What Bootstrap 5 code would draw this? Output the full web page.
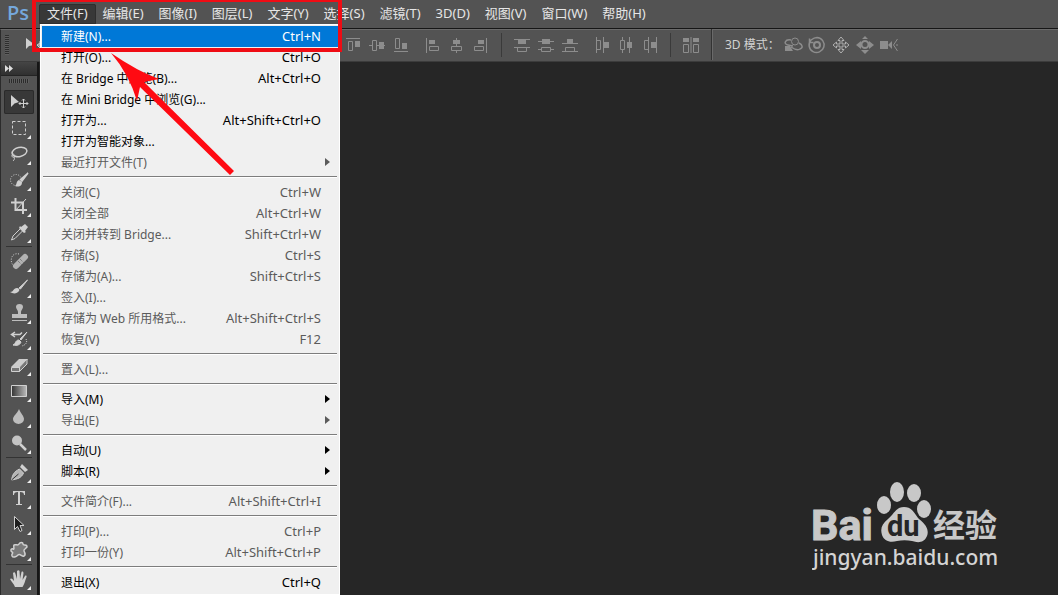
<!DOCTYPE html>
<html lang="zh-CN">
<head>
<meta charset="utf-8">
<meta name="viewport" content="width=device-width, initial-scale=1">
<title>Photoshop</title>
<link rel="stylesheet" href="https://cdn.jsdelivr.net/npm/bootstrap@5.3.0/dist/css/bootstrap.min.css">
<style>
body{background:#262626;color:#e6e6e6;font-family:"Noto Sans","Noto Sans CJK SC",sans-serif;font-size:12px;line-height:20px}
button{background:none;border:0;padding:0;color:inherit;font:inherit}
svg{display:block}
.menu-bar{background:#535353;height:29px;padding-top:4px;border-bottom:1px solid #161616;font-size:13px}
.brand{width:39px;padding-left:7px;color:#75a8dc;font:600 20px/18px "Open Sans",sans-serif}
.menu-btn{height:20px;padding:0 7px 2px;line-height:18px}
.menu-btn + .menu-btn{margin-left:1px}
.menu-btn.show{padding:0 8px 2px;background:#383838;border-radius:2px 2px 0 0;outline:1px solid #2e2e2e;outline-offset:-1px}
.file-menu{left:1px;top:100%;width:300px;padding:1px;border:1px solid #fff;border-radius:0;background:#f0f0f0;margin:0;font-size:12px}
.file-menu .dropdown-item{height:21px;padding:0 17px 0 19px;line-height:21px;color:#000;position:relative}
.file-menu .dropdown-item.off{color:#5b5b5b}
.file-menu .dropdown-item.active{background:#0078d7;color:#fff}
.keys{font-size:13px}
.file-menu .dropdown-divider{margin:3px 1px 4px;border-top:1px solid #7d7d7d;border-bottom:1px solid #fff;opacity:1}
.more::after{content:"";position:absolute;right:8px;top:6px;border:4px solid transparent;border-left:5px solid currentColor;border-right:0}
.option-bar{background:#535353;height:33px;padding-bottom:2px;border-top:1px solid #6a6a6a;border-bottom:1px solid #3c3c3c;border-left:1px solid #2b2b2b}
.grip{width:4px;height:20px;margin-left:4px;background:repeating-linear-gradient(#2e2e2e 0 1px,#5e5e5e 1px 2px)}
.preset{width:332px;padding-left:9px}
.mode-label{width:60px;color:#d2d2d2}
.split{width:1px;height:24px;background:#3a3a3a}
.split-tall{width:2px;height:31px;background:#333;border-right:1px solid #6a6a6a}
.opt{width:24px;height:24px;flex:none;fill:none;stroke:#8d8d8d;color:#8d8d8d}
.opt-set + .opt-set{margin-left:8px}
.tool-bar{width:39px;background:#535353;border-left:1px solid #2b2b2b;border-right:2px solid #161616}
.tool-head{height:14px;background:linear-gradient(#454545,#303030);border-bottom:1px solid #232323;padding:3px 0 0 4px}
.tool-grip{width:20px;height:4px;margin:3px 0 6px 8px;background:repeating-linear-gradient(90deg,#2b2b2b 0 1px,#5e5e5e 1px 2px)}
.tool{width:30px;height:24px;margin:1px 0 1px 3px;position:relative;border-radius:2px;fill:none;stroke:#d0d0d0;color:#d0d0d0}
.tool svg{margin:0 auto}
.tool.on{background:#383838;box-shadow:inset 0 0 0 1px #2a2a2a}
.tool.sub::after{content:"";position:absolute;right:3px;bottom:1px;border-left:4px solid transparent;border-bottom:4px solid #eee}
.tool-line{height:1px;margin:1px 5px;background:#333}
.callout{left:32px;top:-2px;width:310px;height:54px;border:4px solid #ef0c14;z-index:1100;pointer-events:none}
.pointer{left:105px;top:48px;z-index:1101;pointer-events:none}
.watermark{right:46px;bottom:20px}
.wm-cn{font-family:"Noto Sans CJK SC",sans-serif}
</style>
</head>
<body class="d-flex flex-column vh-100 overflow-hidden position-relative">
<header class="menu-bar d-flex align-items-start flex-shrink-0">
  <span class="brand">Ps</span>
  <div class="dropdown">
    <button class="menu-btn show d-block" type="button" aria-expanded="true">文件(F)</button>
    <ul class="dropdown-menu show file-menu">
      <li><button class="dropdown-item active d-flex align-items-baseline justify-content-between">新建(N)...<span class="keys">Ctrl+N</span></button></li>
      <li><button class="dropdown-item d-flex align-items-baseline justify-content-between">打开(O)...<span class="keys">Ctrl+O</span></button></li>
      <li><button class="dropdown-item d-flex align-items-baseline justify-content-between">在 Bridge 中浏览(B)...<span class="keys">Alt+Ctrl+O</span></button></li>
      <li><button class="dropdown-item">在 Mini Bridge 中浏览(G)...</button></li>
      <li><button class="dropdown-item d-flex align-items-baseline justify-content-between">打开为...<span class="keys">Alt+Shift+Ctrl+O</span></button></li>
      <li><button class="dropdown-item">打开为智能对象...</button></li>
      <li><button class="dropdown-item off more">最近打开文件(T)</button></li>
      <li><hr class="dropdown-divider"></li>
      <li><button class="dropdown-item off d-flex align-items-baseline justify-content-between">关闭(C)<span class="keys">Ctrl+W</span></button></li>
      <li><button class="dropdown-item off d-flex align-items-baseline justify-content-between">关闭全部<span class="keys">Alt+Ctrl+W</span></button></li>
      <li><button class="dropdown-item off d-flex align-items-baseline justify-content-between">关闭并转到 Bridge...<span class="keys">Shift+Ctrl+W</span></button></li>
      <li><button class="dropdown-item off d-flex align-items-baseline justify-content-between">存储(S)<span class="keys">Ctrl+S</span></button></li>
      <li><button class="dropdown-item off d-flex align-items-baseline justify-content-between">存储为(A)...<span class="keys">Shift+Ctrl+S</span></button></li>
      <li><button class="dropdown-item off">签入(I)...</button></li>
      <li><button class="dropdown-item off d-flex align-items-baseline justify-content-between">存储为 Web 所用格式...<span class="keys">Alt+Shift+Ctrl+S</span></button></li>
      <li><button class="dropdown-item off d-flex align-items-baseline justify-content-between">恢复(V)<span class="keys">F12</span></button></li>
      <li><hr class="dropdown-divider"></li>
      <li><button class="dropdown-item off">置入(L)...</button></li>
      <li><hr class="dropdown-divider"></li>
      <li><button class="dropdown-item more">导入(M)</button></li>
      <li><button class="dropdown-item off more">导出(E)</button></li>
      <li><hr class="dropdown-divider"></li>
      <li><button class="dropdown-item more">自动(U)</button></li>
      <li><button class="dropdown-item more">脚本(R)</button></li>
      <li><hr class="dropdown-divider"></li>
      <li><button class="dropdown-item off d-flex align-items-baseline justify-content-between">文件简介(F)...<span class="keys">Alt+Shift+Ctrl+I</span></button></li>
      <li><hr class="dropdown-divider"></li>
      <li><button class="dropdown-item off d-flex align-items-baseline justify-content-between">打印(P)...<span class="keys">Ctrl+P</span></button></li>
      <li><button class="dropdown-item off d-flex align-items-baseline justify-content-between">打印一份(Y)<span class="keys">Alt+Shift+Ctrl+P</span></button></li>
      <li><hr class="dropdown-divider"></li>
      <li><button class="dropdown-item d-flex align-items-baseline justify-content-between">退出(X)<span class="keys">Ctrl+Q</span></button></li>
    </ul>
  </div>
  <button class="menu-btn">编辑(E)</button>
  <button class="menu-btn">图像(I)</button>
  <button class="menu-btn">图层(L)</button>
  <button class="menu-btn">文字(Y)</button>
  <button class="menu-btn">选择(S)</button>
  <button class="menu-btn">滤镜(T)</button>
  <button class="menu-btn">3D(D)</button>
  <button class="menu-btn">视图(V)</button>
  <button class="menu-btn">窗口(W)</button>
  <button class="menu-btn">帮助(H)</button>
</header>

<div class="option-bar d-flex align-items-center flex-shrink-0">
  <span class="grip"></span>
  <span class="preset"><svg width="26" height="20" viewBox="0 0 26 20"><path d="M8 3v11l3-3 6-1z" fill="#d0d0d0"/><path d="M22 6v9M20 10h6M22 8l-3 2 3 3" stroke="#d0d0d0" fill="none"/></svg></span>
  <div class="d-flex opt-set">
    <button class="opt" aria-label="顶对齐"><svg width="24" height="24"><path d="M5 5.500h14M7.500 8.500h4v9h-4z"/><path d="M14 8h5v6h-5z" fill="currentColor" stroke="none"/></svg></button>
    <button class="opt" aria-label="垂直居中对齐"><svg width="24" height="24"><path d="M4 12.500h3M12 12.500h8M7.500 7.500h4v10h-4z"/><path d="M14 9h5v7h-5z" fill="currentColor" stroke="none"/></svg></button>
    <button class="opt" aria-label="底对齐"><svg width="24" height="24"><path d="M5 18.500h14M6.500 5.500h4v10h-4z"/><path d="M13 10h5v6h-5z" fill="currentColor" stroke="none"/></svg></button>
  </div>
  <div class="d-flex opt-set">
    <button class="opt" aria-label="左对齐"><svg width="24" height="24"><path d="M5.500 5v15M8.500 13.500h9v4h-9z"/><path d="M8 7h6v4H8z" fill="currentColor" stroke="none"/></svg></button>
    <button class="opt" aria-label="水平居中对齐"><svg width="24" height="24"><path d="M11.500 5v9M11.500 18v2M6.500 13.500h10v4h-10z"/><path d="M8 7h7v4H8z" fill="currentColor" stroke="none"/></svg></button>
    <button class="opt" aria-label="右对齐"><svg width="24" height="24"><path d="M17.500 5v15M5.500 13.500h9v4h-9z"/><path d="M9 7h6v4H9z" fill="currentColor" stroke="none"/></svg></button>
  </div>
  <span class="split mx-2"></span>
  <div class="d-flex opt-set">
    <button class="opt" aria-label="按顶分布"><svg width="24" height="24"><path d="M4 6.500h16M4 14.500h16M7.500 14.500h9v4h-9z"/><path d="M8 7h8v4H8z" fill="currentColor" stroke="none"/></svg></button>
    <button class="opt" aria-label="垂直居中分布"><svg width="24" height="24"><path d="M4 8.500h16M4 16.500h3M16 16.500h4M7.500 14.500h9v4h-9z"/><path d="M8 6h8v5H8z" fill="currentColor" stroke="none"/></svg></button>
    <button class="opt" aria-label="按底分布"><svg width="24" height="24"><path d="M4 10.500h16M4 18.500h16M7.500 14.500h9v4h-9z"/><path d="M9 6h6v4H9z" fill="currentColor" stroke="none"/></svg></button>
  </div>
  <div class="d-flex opt-set">
    <button class="opt" aria-label="按左分布"><svg width="24" height="24"><path d="M6.500 4v16M13.500 4v16M6.500 7.500h4v9h-4z"/><path d="M14 9h5v6h-5z" fill="currentColor" stroke="none"/></svg></button>
    <button class="opt" aria-label="水平居中分布"><svg width="24" height="24"><path d="M8.500 4v3M8.500 17v3M15.500 4v16M6.500 7.500h4v9h-4z"/><path d="M13 9h5v6h-5z" fill="currentColor" stroke="none"/></svg></button>
    <button class="opt" aria-label="按右分布"><svg width="24" height="24"><path d="M10.500 4v16M18.500 4v16M6.500 7.500h4v9h-4z"/><path d="M13 9h5v6h-5z" fill="currentColor" stroke="none"/></svg></button>
  </div>
  <span class="split mx-2"></span>
  <button class="opt" aria-label="自动对齐图层"><svg width="24" height="24"><path d="M12 4v16M4.500 11.500h5v8h-5zM14.500 11.500h5v8h-5z"/><path d="M4 5h6v4H4zM14 5h6v4h-6z" fill="currentColor" stroke="none"/></svg></button>
  <span class="split-tall ms-2"></span>
  <span class="mode-label ms-2 ps-1 text-nowrap">3D 模式：</span>
  <button class="opt" aria-label="旋转 3D 对象"><svg width="24" height="24"><circle cx="14" cy="8.500" r="3.500"/><path d="M10 7c-6-1-8 4-3 5l5 1M18 10c4 2 4 5 1 6-3 2-6 0-9-2" stroke-width="1.500"/><path d="M4 13v5h8l-3-5z" fill="currentColor" stroke="none"/></svg></button>
  <button class="opt" aria-label="滚动 3D 对象"><svg width="24" height="24"><circle cx="12" cy="12" r="3" stroke-width="2"/><path d="M6 7a7.500 7.500 0 1 0 6-2.500c-2 0-4 1-6 2.500M4.500 5.500v4h4" stroke-width="1.500"/></svg></button>
  <button class="opt" aria-label="拖动 3D 对象"><svg width="24" height="24"><path d="M12 4l3 3.500h-2V11h3.500V9l3.500 3-3.500 3v-2H13v3.500h2L12 20l-3-3.500h2V13H7.500v2L4 12l3.500-3v2H11V7.500H9z" stroke="#b0b0b0"/></svg></button>
  <button class="opt" aria-label="滑动 3D 对象"><svg width="24" height="24"><circle cx="12" cy="11.500" r="3.500" stroke-width="2"/><path d="M12 3l3 3H9zM12 21l4-4H8zM3 12l5-4v8zM21 12l-5-4v8z" fill="currentColor" stroke="none"/></svg></button>
  <button class="opt" aria-label="缩放 3D 对象"><svg width="24" height="24"><path d="M3 8h8v8H3zM11 12l4-4v8z" fill="currentColor" stroke="none"/><path d="M20.500 6l-4 6 4 6M19 12h2"/></svg></button>
</div>

<div class="d-flex flex-grow-1 overflow-hidden position-relative">
  <nav class="tool-bar d-flex flex-column flex-shrink-0" aria-label="工具">
    <div class="tool-head"><svg width="10" height="8"><path d="M0 0l4 3.500L0 7zM4 0l4 3.500L4 7z" fill="#ddd"/></svg></div>
    <div class="tool-grip"></div>
    <button class="tool on d-block" aria-label="移动"><svg width="24" height="24"><path d="M4 5v12l3.500-3.500L12 12z" fill="currentColor" stroke="none"/><path d="M16.500 9v9M12 13.500h9M15 10.500l1.500-1.500 1.500 1.500M15 16.500l1.500 1.500 1.500-1.500M13.500 12L12 13.500l1.500 1.500M19.500 12l1.500 1.500-1.500 1.500"/></svg></button>
    <button class="tool sub d-block" aria-label="矩形选框"><svg width="24" height="24"><path d="M5.500 5.500h13v13h-13z" stroke-dasharray="3 2"/></svg></button>
    <button class="tool sub d-block" aria-label="套索"><svg width="24" height="24"><ellipse cx="12.500" cy="10" rx="7.500" ry="4.500" transform="rotate(-12 12.500 10)" stroke-width="1.500"/><path d="M6 12c-2 1-1 4 1 3s0-3-1-3M7 15c1 2 0 3-1 4"/></svg></button>
    <button class="tool sub d-block" aria-label="快速选择"><svg width="24" height="24"><circle cx="9" cy="12" r="5.500" stroke-dasharray="1 1.500"/><path d="M21 5l-6 8-1.500-1.500z" fill="currentColor" stroke-width="1.500"/><path d="M12 12l3 2c0 5-4 5-7 4 2-1 1-5 4-6z" fill="currentColor" stroke="none"/></svg></button>
    <button class="tool sub d-block" aria-label="裁剪"><svg width="24" height="24"><path d="M8.500 4v12H20M4 8.500h12V20" stroke-width="2"/><path d="M8 17L19 5"/></svg></button>
    <button class="tool sub d-block" aria-label="吸管"><svg width="24" height="24"><path d="M14 7l4-3 3 3-3 4 1 1-2 1-5-5 1-2z" fill="currentColor" stroke="none"/><path d="M13 9l-7 7-1.500 4L8 18.500 15.500 11"/></svg></button>
    <div class="tool-line"></div>
    <button class="tool sub d-block" aria-label="污点修复画笔"><svg width="24" height="24"><path d="M12 5c-8-2-10 8-5 12" stroke-dasharray="1 1.500"/><path d="M9 17l9-9" stroke-width="6" stroke-linecap="round" stroke="#b2b2b2"/><path d="M11 12l4 4M13 10l4 4" stroke="#666" stroke-dasharray="1 1"/></svg></button>
    <button class="tool sub d-block" aria-label="画笔"><svg width="24" height="24"><path d="M20.500 5l-7 9-1.500-1z" fill="currentColor"/><path d="M10 13c2 0 3 2 2 3-2 3-6 3-9 1 4 0 3-4 7-4z" fill="currentColor" stroke="none"/></svg></button>
    <button class="tool sub d-block" aria-label="仿制图章"><svg width="24" height="24"><path d="M11 11c0-2-2-3-2-5a3.500 3 0 0 1 7 0c0 2-2 3-2 5v2h6v4H5v-4h6zM5 19h15v1H5z" fill="#bdbdbd" stroke="none"/></svg></button>
    <button class="tool sub d-block" aria-label="历史记录画笔"><svg width="24" height="24"><path d="M20 5l-6 8-1-1zM12 13l2 2c-1 3-4 4-8 3 3-1 2-5 6-5z" fill="currentColor"/><path d="M5 7.500h8l2-2M8 5L4.500 7.500 8 10" stroke-width="1.500"/><path d="M19 12c2 4-1 6-4 7" stroke-dasharray="1 1"/></svg></button>
    <button class="tool sub d-block" aria-label="橡皮擦"><svg width="24" height="24"><path d="M4 14l8-8h9l-8 8z" fill="#ccc" stroke="none"/><path d="M4.500 14.500h8v4h-8zM12.500 18.500L20 11V6l-7.500 8z" fill="#777"/></svg></button>
    <button class="tool sub d-block" aria-label="渐变"><svg width="24" height="24"><defs><linearGradient id="fade"><stop stop-color="#333"/><stop offset="1" stop-color="#bbb"/></linearGradient></defs><path d="M4.500 6.500h15v11h-15z" fill="url(#fade)"/></svg></button>
    <button class="tool sub d-block" aria-label="模糊"><svg width="24" height="24"><path d="M12 4c2 5 5 7 5 10a5.500 5 0 0 1-11 0c0-3 4-5 6-10z" fill="#bdbdbd" stroke="none"/></svg></button>
    <button class="tool sub d-block" aria-label="减淡"><svg width="24" height="24"><circle cx="10" cy="9.500" r="5" fill="#c4c4c4" stroke="none"/><path d="M13 13l6 6" stroke-width="2.500"/></svg></button>
    <div class="tool-line"></div>
    <button class="tool sub d-block" aria-label="钢笔"><svg width="24" height="24"><path d="M4.500 20c1-5 2-8 8-11l4 4c-2 5-6 6-12 7z" fill="#b5b5b5"/><path d="M4.500 20l7-6" stroke="#333"/><path d="M13 7l2-3 6 6-3 2z" fill="currentColor" stroke="none"/></svg></button>
    <button class="tool sub d-block" aria-label="横排文字"><svg width="24" height="24"><path d="M6 5h12v4h-1c0-2-1-3-4-3v12h2v1H9v-1h2V6C8 6 7 7 7 9H6z" fill="currentColor" stroke="none"/></svg></button>
    <button class="tool sub d-block" aria-label="路径选择"><svg width="24" height="24"><path d="M7.500 4.500v13l3-3 2.500 5 2-1-2-5h4z" fill="#1d1d1d"/></svg></button>
    <button class="tool sub d-block" aria-label="自定形状"><svg width="24" height="24"><path d="M7 7c2-1 4 1 5-1s4-2 4 0 3 0 4 2-4 3-3 5 2 4 0 5-4-3-6-1-5 3-6 1 2-3 0-4-1-4 1-3 0-3 1-4z" fill="#7a7a7a" stroke-width="1.500"/></svg></button>
    <div class="tool-line"></div>
    <button class="tool sub d-block" aria-label="抓手"><svg width="24" height="24"><path d="M8 20c-1-3-4-6-5-8 1-1 2-1 4 2L6 6c1-1 2-1 2.500 1l1.500 5V4c1-1 2-1 2.500 0l.5 8 1.500-7c1-1 2 0 2 1L15.500 13 18 9c1-1 2 0 1.500 1-1.500 4-2 7-4 10z" fill="currentColor" stroke="none"/></svg></button>
  </nav>
  <main class="flex-grow-1"></main>
  <svg class="watermark position-absolute" width="200" height="96" viewBox="0 0 200 96" fill="#c8c8c8" role="img" aria-label="百度经验">
    <text x="-1" y="61" font-family="Roboto, sans-serif" font-weight="700" font-size="43" stroke="#c8c8c8">Bai</text>
    <ellipse cx="72" cy="26" rx="7" ry="9"/><ellipse cx="85" cy="13" rx="7" ry="10"/><ellipse cx="102" cy="14" rx="7" ry="9"/><ellipse cx="112" cy="30" rx="7" ry="9"/>
    <path d="M92 28c9 0 11 8 15 12 8 6 10 12 8 17-3 7-9 7-15 5-5-1-10-1-15 0-7 2-13 0-15-6-2-7 0-11 6-16s8-12 16-12z"/>
    <text x="75" y="57" font-family="Roboto, sans-serif" font-weight="700" font-size="29" fill="#262626">du</text>
    <text class="wm-cn" x="121" y="58" font-weight="700" font-size="32">经验</text>
    <text x="1" y="86" font-family="Noto Sans, sans-serif" font-size="21" font-weight="500" fill="#d4d4d4">jingyan.baidu.com</text>
  </svg>
</div>
<div class="callout position-absolute"></div>
<svg class="pointer position-absolute" width="134" height="130" fill="#ff0a12"><path d="M6 5Q32 23 54 31L39 34l90 89-4 4-90-88-3 14Q24 26 6 5z"/></svg>
<script src="https://cdn.jsdelivr.net/npm/bootstrap@5.3.0/dist/js/bootstrap.bundle.min.js"></script>
</body>
</html>
